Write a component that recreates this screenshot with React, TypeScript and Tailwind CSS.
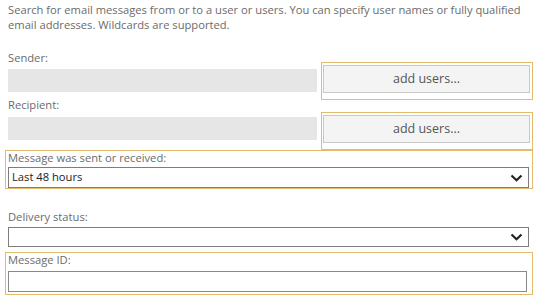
function Chevron() {
  return (
    <svg width="13" height="8" viewBox="0 0 13 8" className="shrink-0">
      <path d="M1.5 1.5 L6.5 6.2 L11.5 1.5" fill="none" stroke="#222" strokeWidth="2.2" />
    </svg>
  );
}

export default function App() {
  return (
    <div className="w-[542px] h-[307px] overflow-hidden bg-white pl-[8px] pr-[13px] font-['Open_Sans',sans-serif] text-[11.2px] text-[#6b6b6b]">
      {/* Intro */}
      <p className="pt-[2px] leading-[15px]">
        Search for email messages from or to a user or users. You can specify user names or fully qualified email
        addresses. Wildcards are supported.
      </p>

      {/* Sender */}
      <div className="mt-[19px] leading-[14px]">Sender:</div>
      <div className="flex items-start -mt-[3px] -mr-[4px]">
        <div className="flex-1 h-[23px] mt-[7px] bg-[#e6e6e6]" />
        <div className="ml-[4px] w-[212px] h-[38px] border border-[#e2bc6c] pl-[1px] pr-[2px] pt-[2px]">
          <button className="w-full h-[28px] bg-[#f4f4f4] border border-[#c8c8c8] text-[12.5px] text-[#555]">
            add users...
          </button>
        </div>
      </div>

      {/* Recipient */}
      <div className="-mt-[2px] leading-[14px]">Recipient:</div>
      <div className="flex items-start -mr-[4px]">
        <div className="flex-1 h-[23px] mt-[5px] bg-[#e6e6e6]" />
        <div className="ml-[4px] w-[212px] h-[38px] border border-[#e2bc6c] pl-[1px] pr-[2px] pt-[2px]">
          <button className="w-full h-[28px] bg-[#f4f4f4] border border-[#c8c8c8] text-[12.5px] text-[#555]">
            add users...
          </button>
        </div>
      </div>

      {/* Message was sent or received */}
      <div className="-ml-[3px] -mr-[4px] border border-[#e2bc6c] pl-[2px] pr-[3px]">
        <div className="leading-[14px]">Message was sent or received:</div>
        <div className="mt-[2px] h-[21px] border border-[#7d7d7d] bg-white flex items-center justify-between pl-[3px] pr-[5px] text-[#222]">
          <span>Last 48 hours</span>
          <Chevron />
        </div>
      </div>

      {/* Delivery status */}
      <div className="mt-[21px] leading-[14px]">Delivery status:</div>
      <div className="mt-[3px] h-[20px] border border-[#7d7d7d] bg-white flex items-center justify-end pr-[5px]">
        <Chevron />
      </div>

      {/* Message ID */}
      <div className="mt-[5px] -ml-[3px] -mr-[4px] border border-[#e2bc6c] pl-[2px] pr-[5px] pb-[2px]">
        <div className="leading-[14px]">Message ID:</div>
        <div className="mt-[4px] h-[21px] border border-[#8a8a8a] bg-white" />
      </div>
    </div>
  );
}
